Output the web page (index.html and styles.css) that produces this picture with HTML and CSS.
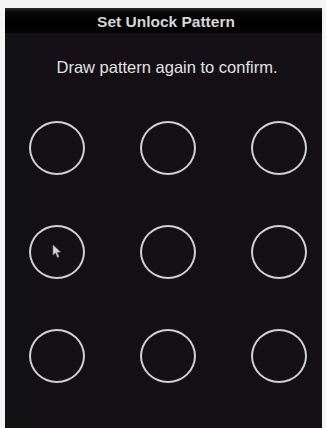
FILE: index.html
```html
<!DOCTYPE html>
<html>
<head>
<meta charset="utf-8">
<link rel="stylesheet" href="styles.css">
</head>
<body>
<div class="panel">
  <div class="title">Set Unlock Pattern</div>
  <div class="content">
    <div class="hint">Draw pattern again to confirm.</div>
    <div class="grid">
      <div class="dot"></div>
      <div class="dot"></div>
      <div class="dot"></div>
      <div class="dot">
        <svg class="cursor" width="10" height="15" viewBox="0 0 10 15"><path d="M1 1 L1 11 L3.5 8.8 L5.5 13.5 L7 12.8 L5 8.2 L8.5 8 Z" fill="#d8d8d8" stroke="#888" stroke-width="0.6"/></svg>
      </div>
      <div class="dot"></div>
      <div class="dot"></div>
      <div class="dot"></div>
      <div class="dot"></div>
      <div class="dot"></div>
    </div>
  </div>
</div>
</body>
</html>
```
FILE: styles.css
```css
html, body {
  margin: 0;
  padding: 0;
  background: #f4f4f4;
  height: 428px;
  overflow: hidden;
}
body {
  padding: 8px 4px 0 5px;
  box-sizing: border-box;
  font-family: "Liberation Sans", Arial, sans-serif;
}
.panel {
  height: 420px;
  background: #141016;
  display: flex;
  flex-direction: column;
}
.title {
  height: 25px;
  line-height: 27px;
  text-align: center;
  padding-left: 5px;
  font-size: 15.5px;
  font-weight: bold;
  color: #d6d6d6;
  background: linear-gradient(#2c2c2c 0px, #080808 4px, #000 60%, #050505 100%);
}
.content {
  flex: 1;
  background: linear-gradient(90deg, #121113 0, #121113 27px, #141016 27px);
}
.hint {
  text-align: center;
  padding-left: 7px;
  font-size: 16.5px;
  color: #e2e2e2;
  margin-top: 25px;
  line-height: 19px;
}
.grid {
  display: grid;
  grid-template-columns: repeat(3, 56px);
  grid-auto-rows: 54px;
  column-gap: 55px;
  row-gap: 50px;
  padding-left: 24px;
  margin-top: 44px;
}
.dot {
  position: relative;
  border: 2px solid #d2d2d2;
  border-radius: 50%;
  box-sizing: border-box;
}
.cursor {
  position: absolute;
  left: 21px;
  top: 17px;
}
```
